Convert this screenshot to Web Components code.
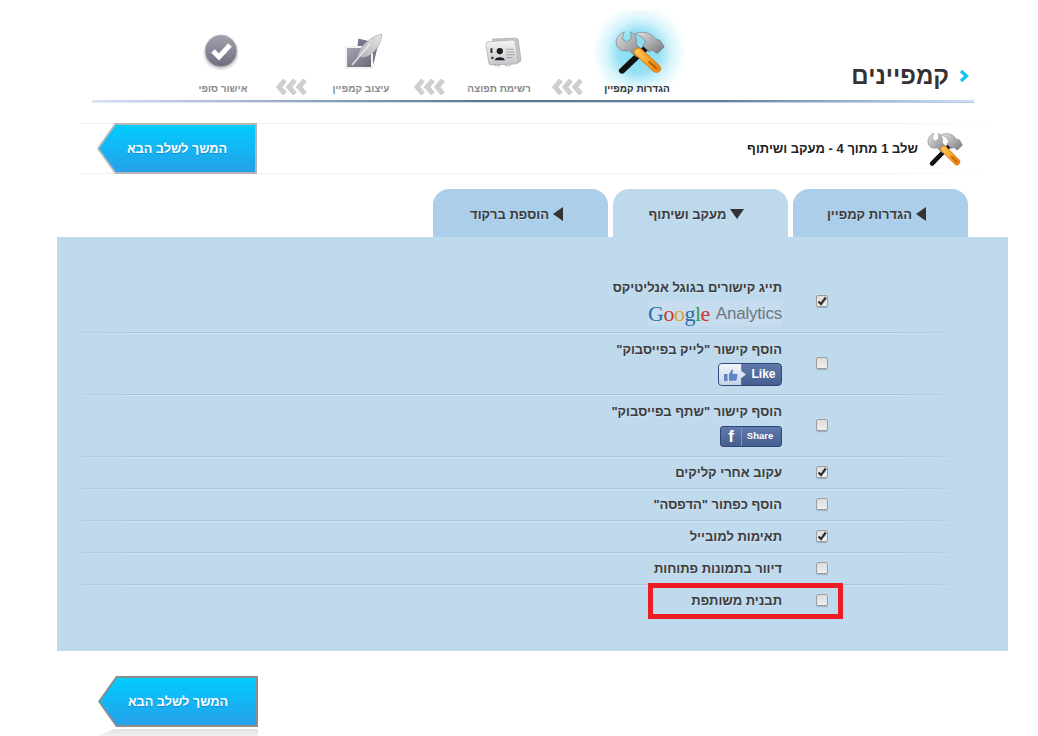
<!DOCTYPE html>
<html lang="he" dir="rtl">
<head>
<meta charset="utf-8">
<title>קמפיינים</title>
<style>
  html, body { margin: 0; padding: 0; background: #fff; overflow: hidden; }
  body { font-family: "Liberation Sans", Arial, sans-serif; direction: rtl; color: #3c3c3c; }
</style>
</head>
<body>
<wizard-header>
  <step-item label="הגדרות קמפיין" current><tools-icon style="margin-left:5px"></tools-icon></step-item>
  <step-arrows></step-arrows>
  <step-item label="רשימת תפוצה"><cards-icon></cards-icon></step-item>
  <step-arrows></step-arrows>
  <step-item label="עיצוב קמפיין"><design-icon></design-icon></step-item>
  <step-arrows></step-arrows>
  <step-item label="אישור סופי"><done-icon></done-icon></step-item>
</wizard-header>

<step-bar>שלב 1 מתוך 4 - מעקב ושיתוף</step-bar>

<tab-strip>
  <tab-item>הגדרות קמפיין</tab-item>
  <tab-item open>מעקב ושיתוף</tab-item>
  <tab-item>הוספת ברקוד</tab-item>
</tab-strip>

<options-panel>
  <option-row label="תייג קישורים בגוגל אנליטיקס" checked tall><ga-logo></ga-logo></option-row>
  <option-row label='הוסף קישור "לייק בפייסבוק"' tall><like-badge></like-badge></option-row>
  <option-row label='הוסף קישור "שתף בפייסבוק"' tall><share-badge></share-badge></option-row>
  <option-row label="עקוב אחרי קליקים" checked></option-row>
  <option-row label='הוסף כפתור "הדפסה"'></option-row>
  <option-row label="תאימות למובייל" checked></option-row>
  <option-row label="דיוור בתמונות פתוחות"></option-row>
  <option-row label="תבנית משותפת" last marked></option-row>
</options-panel>

<next-button reflect style="margin:25px 780px 0 0; --edge:#8c8c8c">המשך לשלב הבא</next-button>

<script>
// small helper, every element gets its own open shadow root from a template
function define(name, html, Base) {
  const tmpl = document.createElement('template');
  tmpl.innerHTML = html;
  customElements.define(name, class extends (Base || HTMLElement) {
    constructor() {
      super();
      this.attachShadow({ mode: 'open' });
      this.shadowRoot.appendChild(tmpl.content.cloneNode(true));
    }
  });
}

define('tools-icon', `
<style>
  :host{display:block;line-height:0}
  svg{width:var(--tool-w,50px);height:var(--tool-h,46px)}
</style>
<svg viewBox="0 0 64 64" preserveAspectRatio="none">
  <defs>
    <linearGradient id="steel" x1="0" y1="0" x2="1" y2="1"><stop offset="0" stop-color="#e2e2e4"/><stop offset=".55" stop-color="#a8a8ac"/><stop offset="1" stop-color="#77777c"/></linearGradient>
    <linearGradient id="amber" x1="0" y1="0" x2="1" y2="0"><stop offset="0" stop-color="#ffc14a"/><stop offset="1" stop-color="#f08a12"/></linearGradient>
  </defs>
  <path d="M9 58 L42 24" stroke="#111" stroke-width="8" stroke-linecap="round"/>
  <path d="M25 7 C35 2 46 5 52 14 L58 16 L63 25 L54 34 L47 29 L44 32 L35 23 L39 19 C37 13 32 9 25 7Z" fill="url(#steel)" stroke="#66666a" stroke-width=".7"/>
  <path d="M12 4 C4 8 0 15 2 22 C4 29 11 32 18 30 L27 39 L36 30 L27 21 C29 14 26 7 20 4 L21 13 L15 18 L9 14 Z" fill="url(#steel)" stroke="#66666a" stroke-width=".7"/>
  <path d="M30 32 L53 55" stroke="#d97a0c" stroke-width="12" stroke-linecap="round"/>
  <path d="M30 32 L53 55" stroke="url(#amber)" stroke-width="9.500" stroke-linecap="round"/>
  <path d="M44 46 L53 55" stroke="#b8620a" stroke-width="3" stroke-linecap="round"/>
</svg>`);

define('cards-icon', `
<style>:host{display:block;line-height:0;margin-left:8px}</style>
<svg viewBox="0 0 40 32" width="37" height="30">
  <defs><linearGradient id="c" x1="0" y1="0" x2="0" y2="1"><stop offset="0" stop-color="#f4f4f4"/><stop offset="1" stop-color="#c6c6ca"/></linearGradient></defs>
  <path d="M8 2 L33 1 Q36 1 36 4 L39 24 Q39 27 36 27 L12 27 Z" fill="#c6c6ca" stroke="#9c9ca0" stroke-width=".6"/>
  <path d="M3 5 L30 3 Q33 3 33 6 L36 26 Q36 29 33 29 L7 30 Q4 30 4 27 L1 8 Q1 5 3 5Z" fill="url(#c)" stroke="#9c9ca0" stroke-width=".6"/>
  <path d="M7 12 v5 M8 21 v2.500" stroke="#222" stroke-width="2"/>
  <circle cx="16" cy="15" r="3.400" fill="#1d1d1f"/>
  <path d="M10.500 25 C11 20.500 21 20.500 21.500 25Z" fill="#1d1d1f"/>
  <path d="M23 13 h8 M23 16 h9 M23 19 h9 M23 22 h7" stroke="#9d9da3" stroke-width="1"/>
  <path d="M11 29 v2 h5 v-2 M22 29 v2 h5 v-2" fill="none" stroke="#9b9b9f" stroke-width=".7"/>
</svg>`);

define('design-icon', `
<style>:host{display:block;line-height:0;margin-left:6px}</style>
<svg viewBox="0 0 42 40" width="42" height="40">
  <defs>
    <linearGradient id="p" x1="0" y1="0" x2="1" y2="1"><stop offset="0" stop-color="#a7a7b0"/><stop offset="1" stop-color="#66667a"/></linearGradient>
    <linearGradient id="f" x1="0" y1="1" x2="1" y2="0"><stop offset="0" stop-color="#b0b0b6"/><stop offset="1" stop-color="#e8e8ea"/></linearGradient>
  </defs>
  <path d="M15 6 L36 11 L31 32 L12 28Z" fill="#77778a" stroke="#fff" stroke-width="1"/>
  <rect x="3" y="15" width="26" height="21" fill="url(#p)" stroke="#f2f2f2" stroke-width="2"/>
  <path d="M14 24 C18 13 27 5 39 2 C38 11 33 21 23 25 C20 26 17 25 14 24Z" fill="url(#f)" stroke="#8d8d92" stroke-width=".5"/>
  <path d="M9 33 L27 12" stroke="#e9e9ec" stroke-width="1.300"/>
</svg>`);

define('done-icon', `
<style>:host{display:block;line-height:0;margin-right:5px}</style>
<svg viewBox="0 0 38 38" width="38" height="38">
  <defs>
    <linearGradient id="d" x1="0" y1="0" x2="0" y2="1"><stop offset="0" stop-color="#a2a2ae"/><stop offset="1" stop-color="#6c6c7e"/></linearGradient>
    <radialGradient id="s"><stop offset=".7" stop-color="#777" stop-opacity=".5"/><stop offset="1" stop-color="#777" stop-opacity="0"/></radialGradient>
  </defs>
  <ellipse cx="19" cy="21" rx="18.500" ry="17" fill="url(#s)"/>
  <circle cx="19" cy="18" r="16" fill="url(#d)" stroke="#b9b9c2" stroke-width="1"/>
  <path d="M11 18 L17 24 L28 12" fill="none" stroke="#fff" stroke-width="5"/>
</svg>`);

define('step-arrows', `
<style>
  :host{display:block;width:42px;flex:none;text-align:center;line-height:0}
</style>
<svg viewBox="0 0 32 16" width="32" height="16">
  <path d="M9 1 L3 8 L9 15 M19 1 L13 8 L19 15 M29 1 L23 8 L29 15" fill="none" stroke="#cfcfcf" stroke-width="5"/>
</svg>`);

define('step-item', `
<style>
  :host{display:flex;flex-direction:column;align-items:center;width:96px;flex:none;height:85px;
    font-size:10px;font-weight:bold;color:#8a8a8a}
  :host([current]){color:#333;
    background:radial-gradient(circle at 52% 42px,#86dcf1 0,#93e0f3 20px,rgba(190,238,250,.6) 33px,rgba(255,255,255,0) 47px)}
  .pic{height:60px;padding-top:12px;display:flex;align-items:center;justify-content:center}
  .txt{height:13px;line-height:13px;white-space:nowrap}
</style>
<div class="pic"><slot></slot></div>
<div class="txt"></div>`, class extends HTMLElement {
  connectedCallback() { this.shadowRoot.querySelector('.txt').textContent = this.getAttribute('label'); }
});

define('wizard-header', `
<style>
  :host{display:flex;align-items:flex-end;box-sizing:border-box;height:103px;margin:0 64px 0 92px;padding-bottom:8px;
    background:
      linear-gradient(to right,#d6e4f4 0,#c3d2e4 6%,#5f7488 45%,#6a8098 72%,#cfe0f4 100%) left bottom 1px/100% 2px no-repeat,
      linear-gradient(to right,#dfeaf6,#b9cde4) left bottom/100% 1px no-repeat}
  .title{width:289px;box-sizing:border-box;flex:none;display:flex;align-items:center;gap:10px;padding-right:5px;margin-bottom:5px;
    font-size:24px;line-height:28px;font-weight:bold;color:#333}
  svg{flex:none}
  .steps{display:flex;align-items:flex-end}
</style>
<div class="title">
  <svg viewBox="0 0 10 12" width="10" height="12"><path d="M2 1 L7.500 6 L2 11" fill="none" stroke="#0ac4f4" stroke-width="3.200"/></svg>
  <span>קמפיינים</span>
</div>
<div class="steps"><slot></slot></div>`);

define('next-button', `
<style>
  :host{display:block;width:160px;flex:none;--edge:#b5b5b5}
  .edge{height:51px;box-sizing:border-box;padding:2px;background:var(--edge);
    clip-path:polygon(0 50%,18px 0,100% 0,100% 100%,18px 100%)}
  .face{height:100%;display:flex;align-items:center;justify-content:center;
    background:linear-gradient(#01ccff,#26a0e8);color:#fff;font-size:12.700px;font-weight:bold;white-space:nowrap;
    text-shadow:0 1px 1px rgba(0,70,120,.35);
    clip-path:polygon(0 50%,17px 0,100% 0,100% 100%,17px 100%)}
  .mirror{display:none}
  :host([reflect]) .mirror{display:block;height:7px;margin-top:2px;background:linear-gradient(#e2e2e2,#f1f1f1);
    clip-path:polygon(0 100%,16px 0,100% 0,100% 100%)}
</style>
<div class="edge"><div class="face"><slot></slot></div></div>
<div class="mirror"></div>`);

define('step-bar', `
<style>
  :host{display:flex;align-items:center;height:51px;box-sizing:border-box;margin:20px 38px 0 80px;padding:0 37px 0 17px;gap:9px;
    font-size:13px;font-weight:bold;color:#222;--tool-w:36px;--tool-h:36px;
    background:
      linear-gradient(to right,#eee 85%,rgba(238,238,238,0)) top/100% 1px no-repeat,
      linear-gradient(to right,#f2f2f2 85%,rgba(242,242,242,0)) left bottom/100% 1px no-repeat}
  next-button{margin-right:auto}
  tools-icon{flex:none}
</style>
<tools-icon></tools-icon>
<span><slot></slot></span>
<next-button>המשך לשלב הבא</next-button>`);

define('tab-strip', `
<style>
  :host{display:flex;gap:5px;height:48px;margin-top:15px;padding-right:70px}
</style>
<slot></slot>`);

define('tab-item', `
<style>
  :host{display:flex;align-items:center;justify-content:center;gap:4px;width:175px;flex:none;box-sizing:border-box;padding:2px 8px 0 0;
    border-radius:16px 16px 0 0;background:#abcfea;font-size:13px;font-weight:bold;color:#3c3c3c;
    text-shadow:0 1px 0 rgba(255,255,255,.25)}
  :host([open]){background:#bed8ec}
  .side,.down{display:block;flex:none}
  .down{display:none}
  :host([open]) .side{display:none}
  :host([open]) .down{display:block}
</style>
<svg class="side" viewBox="0 0 10 14" width="10" height="14"><path d="M0 7 L10 0 V14Z" fill="#333"/></svg>
<svg class="down" viewBox="0 0 14 10" width="14" height="10"><path d="M0 0 H14 L7 10Z" fill="#333"/></svg>
<span><slot></slot></span>`);

define('options-panel', `
<style>
  :host{display:block;height:414px;box-sizing:border-box;margin:0 30px 0 57px;padding-top:35px;background:#bfd9ed}
</style>
<slot></slot>`);

define('check-box', `
<style>
  :host{display:block;width:12px;height:12px;box-sizing:border-box;flex:none;border:1px solid #9c9c9c;border-radius:2px;
    background:linear-gradient(#dcdcdc,#efefef);box-shadow:0 0 1px rgba(255,255,255,.8),0 1px 1px rgba(90,110,130,.45);line-height:0}
  svg{display:none}
  :host([checked]) svg{display:block}
</style>
<svg viewBox="0 0 10 10" width="10" height="10"><path d="M1.500 5.500 L4 8 L8.800 1.500" fill="none" stroke="#2f2f2f" stroke-width="2.200"/></svg>`);

define('option-row', `
<style>
  :host{display:flex;align-items:center;position:relative;box-sizing:border-box;height:32px;padding-right:180px;gap:34px;
    background:
      linear-gradient(to right,rgba(169,195,216,0) 0,#a9c3d8 8%,#a9c3d8 88%,rgba(169,195,216,0) 96%) left bottom 1px/100% 1px no-repeat,
      linear-gradient(to right,rgba(208,228,244,0) 0,#cfe3f3 8%,#cfe3f3 88%,rgba(208,228,244,0) 96%) left bottom/100% 1px no-repeat}
  :host([tall]){height:62px}
  :host([last]){background:none}
  check-box{margin-bottom:4px}
  .body{display:flex;flex-direction:column;align-items:flex-start;align-self:flex-start;padding-top:7px}
  :host([tall]) .body{padding-top:8px}
  .txt{height:16px;line-height:16px;font-size:13px;font-weight:bold;color:#3c3c3c;white-space:nowrap;
    text-shadow:0 1px 0 rgba(255,255,255,.25)}
  .extra{margin-top:6px}
  :host(:not([tall])) .extra{display:none}
  .mark{display:none;position:absolute;left:591px;right:165px;top:-3px;height:36px;box-sizing:border-box;border:5px solid #ed1c24}
  :host([marked]) .mark{display:block}
</style>
<check-box></check-box>
<div class="body"><div class="txt"></div><div class="extra"><slot></slot></div></div>
<div class="mark"></div>`, class extends HTMLElement {
  connectedCallback() {
    this.shadowRoot.querySelector('.txt').textContent = this.getAttribute('label');
    if (this.hasAttribute('checked')) this.shadowRoot.querySelector('check-box').setAttribute('checked', '');
  }
});

define('ga-logo', `
<style>
  :host{display:flex;align-items:center;justify-content:center;gap:6px;direction:ltr;width:134px;height:25px;margin:-1px 0 -3px;background:#c7dcee;overflow:hidden;white-space:nowrap}
  .g{font:22px/25px "Liberation Serif",serif;letter-spacing:-.5px}
  .a{font:17px/25px "Liberation Sans",sans-serif;color:#6e7780;letter-spacing:-.2px}
</style>
<span class="g"><span style="color:#2a6fa8">G</span><span style="color:#c8392c">o</span><span style="color:#e0a52a">o</span><span style="color:#2a6fa8">g</span><span style="color:#3e9a4a">l</span><span style="color:#c8392c">e</span></span>
<span class="a">Analytics</span>`);

define('like-badge', `
<style>
  :host{display:flex;direction:ltr;box-sizing:border-box;width:64px;height:23px;margin-top:-1px;border:1px solid #2f4775;border-radius:4px;overflow:hidden;
    background:linear-gradient(#6179aa,#455f92)}
  .thumb{width:27px;flex:none;display:flex;align-items:center;padding-left:4px;box-sizing:border-box;background:linear-gradient(#f4f6fb,#c6d1e6);
    clip-path:polygon(0 0,82% 0,82% 32%,100% 50%,82% 68%,82% 100%,0 100%)}
  .t{flex:1;text-align:center;color:#fff;font-size:12px;font-weight:bold;line-height:20px}
</style>
<div class="thumb"><svg viewBox="0 0 16 14" width="16" height="14">
  <rect x="1" y="6" width="3.500" height="7" fill="#5f86c4"/>
  <path d="M5.500 6.500 L8.500 1 Q10.500 .5 10.300 3 L10 5.500 H14 Q15.500 6 14.800 8 L13.800 12.500 Q13.300 13.500 12 13.300 H5.500Z" fill="#5f86c4" stroke="#fff" stroke-width=".6"/>
</svg></div>
<div class="t">Like</div>`);

define('share-badge', `
<style>
  :host{display:flex;direction:ltr;box-sizing:border-box;width:62px;height:21px;border:1px solid #2f4775;border-radius:3px;
    background:linear-gradient(#627aab,#445e90);color:#fff}
  .f{width:21px;flex:none;box-sizing:border-box;text-align:center;border-right:1px solid #7f94bd;font:bold 17px/19px "Liberation Sans",sans-serif}
  .t{flex:1;text-align:center;font-size:9.500px;font-weight:bold;line-height:18px;padding-right:3px}
</style>
<div class="f">f</div>
<div class="t">Share</div>`);
</script>
</body>
</html>
